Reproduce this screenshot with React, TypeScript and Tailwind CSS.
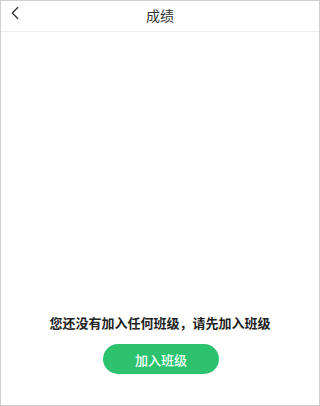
import { ChevronLeft } from "lucide-react";

export default function App() {
  return (
    <div
      className="w-[320px] h-[406px] bg-white border border-[#cfcfcf] flex flex-col"
      style={{ fontFamily: '"Noto Sans CJK SC", "Noto Sans", sans-serif' }}
    >
      {/* Header */}
      <div className="relative h-[31px] flex items-center justify-center border-b border-[#eeeeee]">
        <button className="absolute left-[3px] top-[1px] text-[#333]">
          <ChevronLeft className="w-[22px] h-[22px]" strokeWidth={1.4} />
        </button>
        <h1 className="text-[14px] text-[#333] leading-none -mt-[3px]">成绩</h1>
      </div>

      {/* Empty state */}
      <div className="flex-1 flex flex-col items-center justify-end pb-[31px]">
        <p className="text-[13px] leading-[20px] font-semibold text-[#222]">
          您还没有加入任何班级，请先加入班级
        </p>
        <button className="mt-[11px] ml-[2px] w-[116px] h-[30px] rounded-full bg-[#2dc36e] text-white text-[13px] font-medium leading-none">
          加入班级
        </button>
      </div>
    </div>
  );
}
